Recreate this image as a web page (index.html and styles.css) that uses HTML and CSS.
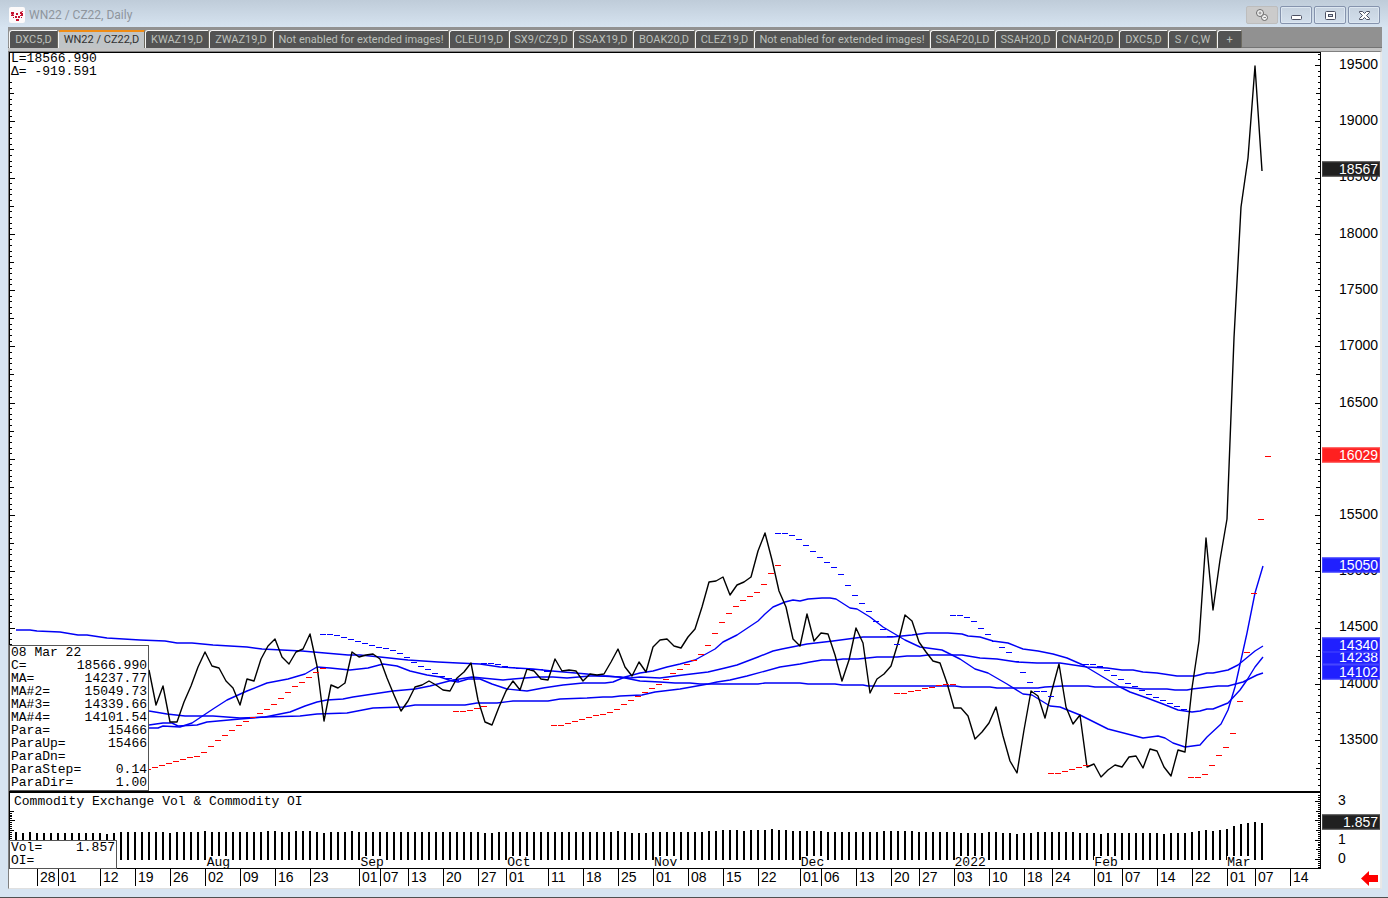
FILE: index.html
```html
<!DOCTYPE html>
<html lang="en">
<head>
<meta charset="utf-8">
<title>WN22 / CZ22, Daily</title>
<link rel="stylesheet" href="styles.css">
</head>
<body>
<div class="window">
  <header class="titlebar">
    <svg class="app-icon" viewBox="0 0 16 16" aria-hidden="true">
      <rect width="16" height="16" rx="2" fill="#fdfafa"/>
      <g fill="#c4122f">
        <path d="M2 5h3v2l-1 1h1v1H2V8l1-1H2z"/>
        <rect x="7" y="6" width="2" height="2"/>
        <rect x="6" y="9" width="2" height="2"/>
        <rect x="9" y="9" width="2" height="2"/>
        <path d="M11 5l3-1v1h-1v1h1v3h-3V8h1V7h-1z"/>
        <rect x="7" y="12" width="3" height="2"/>
        <rect x="4" y="10" width="1" height="1"/>
        <rect x="12" y="10" width="1" height="1"/>
      </g>
    </svg>
    <h1 class="title">WN22 / CZ22, Daily</h1>
    <div class="controls">
      <button class="ctl ctl-link" type="button" aria-label="Link">
        <svg viewBox="0 0 16 14" width="16" height="14"><g fill="#f2f2f2" stroke="#6a6a6a"><circle cx="6" cy="5" r="3.500"/><circle cx="10.500" cy="9.500" r="3"/><path d="M4.500 5h3M6 3.500v3M9.500 9.500h2.500" stroke="#888"/></g></svg>
      </button>
      <button class="ctl" type="button" aria-label="Minimize">
        <svg viewBox="0 0 16 14" width="16" height="14"><rect x="3.500" y="7.500" width="10" height="4" rx="1" fill="#fff" stroke="#4c5062"/></svg>
      </button>
      <button class="ctl" type="button" aria-label="Restore">
        <svg viewBox="0 0 16 14" width="16" height="14"><rect x="3.500" y="3.500" width="10" height="8" rx="1" fill="#fff" stroke="#4c5062"/><rect x="6.500" y="6.500" width="4" height="2" fill="#cdd9e6" stroke="#4c5062"/></svg>
      </button>
      <button class="ctl" type="button" aria-label="Close">
        <svg viewBox="0 0 16 14" width="16" height="14"><path d="M3.500 3.500h3L8.500 5.500l2-2h3v1L10.500 7.500l3 3v1h-3l-2-2-2 2h-3v-1l3-3-3-3z" fill="#fff" stroke="#4c5062"/></svg>
      </button>
    </div>
  </header>

  <nav class="tabs">
    <button class="tab" type="button">DXC5,D</button>
    <button class="tab active" type="button">WN22 / CZ22,D</button>
    <button class="tab" type="button">KWAZ19,D</button>
    <button class="tab" type="button">ZWAZ19,D</button>
    <button class="tab" type="button">Not enabled for extended images!</button>
    <button class="tab" type="button">CLEU19,D</button>
    <button class="tab" type="button">SX9/CZ9,D</button>
    <button class="tab" type="button">SSAX19,D</button>
    <button class="tab" type="button">BOAK20,D</button>
    <button class="tab" type="button">CLEZ19,D</button>
    <button class="tab" type="button">Not enabled for extended images!</button>
    <button class="tab" type="button">SSAF20,LD</button>
    <button class="tab" type="button">SSAH20,D</button>
    <button class="tab" type="button">CNAH20,D</button>
    <button class="tab" type="button">DXC5,D</button>
    <button class="tab" type="button">S / C,W</button>
    <button class="tab add" type="button" aria-label="Add tab">+</button>
  </nav>

  <main class="chart">
    <section class="pane price-pane">
      <svg class="plot" id="price-plot" viewBox="9 52 1312 739" preserveAspectRatio="none"></svg>
      <div class="last-quote">L=18566.990<br>Δ= -919.591</div>
      <table class="readout">
        <tbody>
          <tr><th class="name">08 Mar 22</th><td></td></tr>
          <tr><th>C=</th><td>18566.990</td></tr>
          <tr><th>MA=</th><td>14237.77</td></tr>
          <tr><th>MA#2=</th><td>15049.73</td></tr>
          <tr><th>MA#3=</th><td>14339.66</td></tr>
          <tr><th>MA#4=</th><td>14101.54</td></tr>
          <tr><th>Para=</th><td>15466</td></tr>
          <tr><th>ParaUp=</th><td>15466</td></tr>
          <tr><th>ParaDn=</th><td></td></tr>
          <tr><th>ParaStep=</th><td>0.14</td></tr>
          <tr><th>ParaDir=</th><td>1.00</td></tr>
        </tbody>
      </table>
    </section>
    <aside class="scale" id="price-scale"></aside>

    <section class="pane volume-pane">
      <svg class="plot" id="volume-plot" viewBox="9 791 1312 78" preserveAspectRatio="none"></svg>
      <h2 class="pane-title">Commodity Exchange Vol &amp; Commodity OI</h2>
      <div class="months" id="months"></div>
      <table class="readout readout-volume">
        <tbody>
          <tr><th>Vol=</th><td>1.857</td></tr>
          <tr><th>OI=</th><td></td></tr>
        </tbody>
      </table>
    </section>
    <aside class="scale scale-volume" id="volume-scale"></aside>

    <div class="dates" id="dates"></div>
    <div class="corner">
      <svg viewBox="0 0 17 15" width="17" height="15" aria-label="Scroll to latest"><path d="M0 7.500L8 0v4h9v7H8v4z" fill="#f00"/></svg>
    </div>
  </main>
</div>
<script src="chart.js"></script>
</body>
</html>
```

FILE: styles.css
```css
* {
  box-sizing: border-box;
}

html,
body {
  height: 100%;
  margin: 0;
}

.window {
  display: flex;
  flex-direction: column;
  height: 100vh;
  padding: 0 6px 8px 8px;
  background: #d7e4f1;
  border-bottom: 1px solid #505050;
  overflow: hidden;
}

.titlebar {
  display: flex;
  align-items: center;
  flex: none;
  height: 27px;
  margin: 0 -6px 0 -8px;
  padding: 3px 8px 0 9px;
  background: linear-gradient(#bfccd9, #d6e3f0);
}

.app-icon {
  width: 16px;
  height: 16px;
}

.title {
  flex: 1;
  margin: 0 0 0 4px;
  font: 12px/16px Roboto, sans-serif;
  color: #8e959d;
}

.controls {
  display: flex;
  gap: 2px;
}

.ctl {
  display: flex;
  align-items: center;
  justify-content: center;
  width: 32px;
  height: 18px;
  padding: 0;
  border: 1px solid #8593ad;
  border-radius: 2px;
  background: linear-gradient(#c6d2df, #d3dfec);
  box-shadow: inset 0 0 0 1px #dde7f1;
}

.ctl-link {
  border-color: #bdbdbd;
  background: #cbcbcb;
  box-shadow: none;
}

.tabs {
  display: grid;
  grid-template-columns: 49px 87px 64px 64px 176px 60px 64px 60px 62px 59px 176px 65px 61px 63px 49px 49px 25px;
  flex: none;
  height: 24px;
  padding: 3px 0 0 1px;
  background: #919191;
  border-bottom: 3px solid #c4c4c4;
  box-shadow: inset 0 -1px #747474;
}

.tab {
  padding: 0;
  overflow: hidden;
  border: 0;
  border-top: 1px solid #f4f4f4;
  border-left: 1px solid #f4f4f4;
  border-right: 1px solid #6c6a60;
  border-top-left-radius: 3px;
  background: #535353;
  font: 11px/16px Roboto, sans-serif;
  color: #bcc0bb;
  white-space: nowrap;
}

.tab.active {
  border-top: 2px solid #f08c14;
  background: #c0c4c6;
  color: #303030;
  line-height: 14px;
}

.chart {
  display: grid;
  grid-template-columns: minmax(0, 1fr) 59px;
  grid-template-rows: minmax(0, 1fr) 78px 19px;
  flex: 1;
  min-height: 0;
  border: 1px solid #808080;
  border-right: 2px solid #e8e8e8;
  border-bottom-color: #e0e0e0;
  background: #fff;
  font: 13px/13px "Liberation Mono", monospace;
  color: #000;
}

.pane {
  position: relative;
  border-left: 1px solid #000;
  border-right: 1px solid #000;
}

.price-pane {
  border-top: 1px solid #000;
}

.volume-pane {
  border-top: 2px solid #000;
  border-bottom: 1px solid #000;
}

.plot {
  position: absolute;
  inset: -1px;
  width: calc(100% + 2px);
  height: calc(100% + 1px);
}

.volume-pane .plot {
  inset: -2px -1px -1px;
  height: calc(100% + 3px);
}

.line {
  fill: none;
  stroke-linejoin: round;
  vector-effect: non-scaling-stroke;
}

.close {
  stroke: #000;
  stroke-width: 1.4;
}

.average {
  stroke: #0000f5;
  stroke-width: 1.4;
}

.crisp {
  shape-rendering: crispEdges;
}

.up {
  fill: #f00;
}

.down {
  fill: #00f;
}

.last-quote {
  position: absolute;
  top: -1px;
  left: 0;
  padding-left: 1px;
}

.readout {
  position: absolute;
  bottom: 0;
  left: -1px;
  width: 140px;
  padding-bottom: 1px;
  table-layout: fixed;
  border: 1px solid #555;
  border-collapse: separate;
  border-spacing: 0;
  background: #fff;
}

.readout th,
.readout td {
  padding: 0 1px;
  height: 13px;
  font-weight: normal;
  text-align: left;
  white-space: nowrap;
}

.readout td {
  width: 74px;
  text-align: right;
}

.readout-volume {
  bottom: -1px;
  width: 108px;
}

.pane-title {
  position: relative;
  margin: 2px 4px;
  font: inherit;
}

.months span {
  position: absolute;
  bottom: 0;
  height: 12px;
  background: #fff;
}

.scale,
.dates {
  position: relative;
  font: 14px/13px "Liberation Sans", sans-serif;
}

.scale span {
  position: absolute;
  right: 2px;
  transform: translateY(-50%);
}

.scale .badge {
  left: 1px;
  right: 0;
  height: 15px;
  padding-right: 1px;
  border: 1px solid;
  color: #fff;
  text-align: right;
}

.scale-volume span {
  right: auto;
  left: 17px;
}

.badge.black {
  background: #202020;
  border-color: #444;
}

.badge.red {
  background: #ff2020;
  border-color: #ff4848;
}

.badge.blue {
  background: #2020ff;
  border-color: #4848ff;
}

.dates span {
  position: absolute;
  top: 0;
  height: 17px;
  padding: 2px 0 0 2px;
  border-left: 1px solid #000;
}

.corner {
  display: flex;
  justify-content: flex-end;
  padding: 2px 2px 0 0;
}
```

FILE: chart.js
```js
const LEFT = 9, WIDTH = 1312, TOP = 52, HEIGHT = 739, VOL_TOP = 791, VOL_HEIGHT = 78;
const barX = i => 16 + 7 * i;
const priceY = p => 65 + (19500 - p) * 0.1125;
const volumeY = v => 859 - v * 19.33;

const close = [
  670,705,686,722,722,702,686,667,652,666,668,681,688,705,679,681,659,646,639,657,664,652,649,634,
  666,721,685,688,683,652,657,655,654,659,678,695,711,701,687,685,681,685,690,691,678,672,663,700,
  722,725,707,691,681,690,669,671,679,680,659,671,670,671,681,674,675,674,662,649,667,676,662,672,
  647,640,639,646,648,637,629,607,582,581,577,595,585,582,577,551,533,560,591,607,639,646,614,641,
  633,634,655,681,660,628,643,693,679,674,666,643,615,621,642,652,661,663,683,708,708,716,739,732,
  723,707,736,761,773,730,691,696,718,690,664,707,724,715,767,764,777,770,765,767,757,756,768,749,
  751,767,776,750,752,688,641,538,610,560,519,338,207,158,66,171
];

const averages = [
  "16,630 30,630 37,631 60,632 78,635 87,635 107,638 140,640 165,641 177,643 192,643 213,645 247,647 262,649 302,651 325,653 348,655 360,655 380,657 408,660 438,662 458,663 480,664 500,667 533,669 552,671 587,674 600,676 620,677 640,681 660,682 675,683 690,683 700,684 758,684 765,683 800,683 808,684 835,684 842,685 863,685 868,686 955,686 962,687 990,687 997,688 1038,688 1045,687 1063,686 1088,686 1095,687 1122,687 1143,689 1167,689 1175,690 1187,690 1192,689 1218,686 1228,686 1243,682 1257,675 1263,673",
  "149,711 167,714 185,716 213,716 240,718 265,717 300,716 317,714 347,713 373,708 403,707 415,705 465,705 477,703 497,703 513,701 548,701 560,699 587,698 603,697 612,697 620,696 642,695 655,692 680,689 708,684 717,682 730,680 747,676 780,667 800,664 810,662 822,660 835,660 843,659 858,659 877,657 897,657 907,656 920,656 928,655 962,655 980,658 997,659 1017,662 1037,663 1060,663 1087,667 1107,668 1122,670 1133,670 1143,672 1157,673 1177,676 1195,676 1207,673 1213,673 1228,670 1238,665 1255,651 1263,646",
  "149,725 163,723 172,723 178,726 197,725 207,722 240,719 265,717 290,712 305,706 317,702 327,700 343,699 353,697 393,691 415,689 430,686 453,680 472,677 482,678 503,680 513,679 537,677 553,677 567,678 590,676 607,676 630,678 640,677 660,678 683,675 708,672 725,668 737,665 758,657 773,651 782,649 807,644 833,641 863,637 892,637 912,635 927,633 948,633 962,634 968,636 980,637 993,641 1008,643 1023,649 1038,651 1053,654 1067,658 1083,665 1103,677 1120,687 1130,692 1147,698 1163,704 1178,710 1192,712 1200,711 1207,709 1213,709 1228,703 1240,690 1247,680 1255,667 1263,657",
  "149,728 158,728 163,726 180,727 192,723 213,709 227,700 247,691 267,683 288,679 305,674 317,667 330,668 350,670 368,668 383,664 397,666 410,671 427,675 440,677 452,681 458,682 468,679 480,679 492,684 507,689 527,691 543,688 563,685 583,683 605,683 613,682 625,677 640,673 653,671 667,667 680,664 695,660 715,649 723,642 737,635 758,621 765,614 773,607 785,602 793,600 800,601 808,599 822,598 830,598 836,599 850,608 857,609 870,617 883,627 905,640 920,647 942,650 960,659 975,669 988,673 1007,684 1023,694 1032,695 1050,706 1060,707 1080,715 1108,729 1143,738 1158,736 1165,738 1173,743 1185,747 1200,745 1207,737 1221,724 1228,710 1235,687 1247,633 1255,593 1263,566"
];

/* Parabolic stops: first bar index, class, then one level per bar. */
const stops = [
  [19, "up", [769,767,765,763,761,759,757,756,752,746,740,735,730,725,721,717,713,709,704,698,692,686,682,677,672,668]],
  [44, "down", [634,634,635,637,639,641,643,645,647,648,650,653,657,662,666,669,673,676,678,680]],
  [63, "up", [711,711,710,708,706]],
  [67, "down", [663,663,664,666,667,668,668,669,669,671]],
  [77, "up", [725,725,723,721,719,717,715,714,712,709,704,700,696,692,688,684,679,673,669,664,660,654,645,633,622,613,606,600,596,592,584,573,565]],
  [109, "down", [533,533,535,539,545,551,557,562,567,574,585,595,603,611,621,629,636,644]],
  [126, "up", [693,693,691,690,688,687,685,684,684]],
  [134, "down", [615,615,617,621,628,634,641,647,652,661,672,682,691,691,696]],
  [148, "up", [773,773,771,769,767,765]],
  [153, "down", [664,664,666,670,675,679,683,686,690,694,697,700,703,706,709]],
  [168, "up", [777,777,774,765,755,747,733,701,652,593,519,456]]
];

/* Bar tops of the volume pane as [level, number of bars]. */
const volumeRuns = [
  [832,1],[833,1],[832,1],[833,10],[834,1],[833,1],[832,7],[833,1],[832,4],[831,1],[832,8],[831,2],[832,2],[831,3],
  [832,1],[833,1],[832,3],[831,1],[832,18],[833,2],[832,17],[831,1],[832,1],[833,3],[832,8],[831,2],[830,3],[831,1],
  [830,3],[829,1],[830,2],[831,5],[832,8],[831,5],[832,6],[833,4],[832,2],[833,2],[834,1],[833,2],[832,6],[833,3],
  [834,1],[833,8],[834,1],[833,3],[832,1],[831,1],[830,1],[831,1],[830,1],[829,1],[826,1],[824,1],[823,1],[822,1],[823,1]
];

const dates = [
  [3,"28"],[6,"01"],[12,"12"],[17,"19"],[22,"26"],[27,"02"],[32,"09"],[37,"16"],[42,"23"],[49,"01"],[52,"07"],
  [56,"13"],[61,"20"],[66,"27"],[70,"01"],[76,"11"],[81,"18"],[86,"25"],[91,"01"],[96,"08"],[101,"15"],[106,"22"],
  [112,"01"],[115,"06"],[120,"13"],[125,"20"],[129,"27"],[134,"03"],[139,"10"],[144,"18"],[148,"24"],[154,"01"],
  [158,"07"],[163,"14"],[168,"22"],[173,"01"],[177,"07"],[182,"14"]
];
const months = [[27,"Aug"],[49,"Sep"],[70,"Oct"],[91,"Nov"],[112,"Dec"],[134,"2022"],[154,"Feb"],[173,"Mar"]];

const rect = (x, y, w, h, cls = "") =>
  `<rect class="crisp ${cls}" x="${x}" y="${y}" width="${w}" height="${h}"/>`;
const tickPair = (y, len) => rect(LEFT, y, len + 1, 1) + rect(1320 - len, y, len + 1, 1);

let price = "";
for (let p = 13100; p <= 19600; p += 50) {
  const y = Math.round(priceY(p));
  const len = p % 500 === 0 ? 5 : p % 250 === 0 ? 4 : 2;
  /* The left ruler starts below the last quote. */
  price += y > 80 ? tickPair(y, len) : rect(1320 - len, y, len + 1, 1);
}
for (const points of averages) price += `<polyline class="line average" points="${points}"/>`;
price += `<polyline class="line close" points="${close.map((y, k) => barX(k + 19) + "," + y).join(" ")}"/>`;
for (const [first, cls, levels] of stops) {
  levels.forEach((y, k) => { price += rect(barX(first + k) - 4, y, 6, 1, cls); });
}
document.getElementById("price-plot").innerHTML = price;

let volume = "";
for (let t = -5; t <= 33; t++) {
  const y = Math.round(volumeY(t / 10));
  const len = t % 10 === 0 ? 5 : t % 5 === 0 ? 4 : 2;
  volume += y > 810 ? tickPair(y, len) : rect(1320 - len, y, len + 1, 1);
}
let bar = 0;
for (const [y, count] of volumeRuns) {
  for (let k = 0; k < count && bar < 179; k++, bar++) volume += rect(barX(bar) - 1, y, 2, 860 - y);
}
document.getElementById("volume-plot").innerHTML = volume;

const across = x => ((x - LEFT) / WIDTH * 100).toFixed(3) + "%";
const down = (y, top, height) => ((y - top) / height * 100).toFixed(3) + "%";
const label = (y, top, height, text, cls = "") =>
  `<span class="${cls}" style="top:${down(y, top, height)}">${text}</span>`;

let scale = "";
for (let p = 13500; p <= 19500; p += 500) {
  if (p !== 16000) scale += label(priceY(p) - 1, TOP, HEIGHT, p);
}
for (const [y, text, colour] of [[169,18567,"black"],[455,16029,"red"],[565,15050,"blue"],[657,14238,"blue"],[645,14340,"blue"],[672,14102,"blue"]]) {
  scale += label(y, TOP, HEIGHT, text, "badge " + colour);
}
document.getElementById("price-scale").innerHTML = scale;

document.getElementById("volume-scale").innerHTML =
  label(800, VOL_TOP, VOL_HEIGHT, "3") + label(839, VOL_TOP, VOL_HEIGHT, "1") +
  label(858, VOL_TOP, VOL_HEIGHT, "0") + label(822, VOL_TOP, VOL_HEIGHT, "1.857", "badge black");

document.getElementById("dates").innerHTML =
  dates.map(([i, text]) => `<span style="left:${across(barX(i))}">${text}</span>`).join("");
document.getElementById("months").innerHTML =
  months.map(([i, text]) => `<span style="left:${across(barX(i) + 1)}">${text}</span>`).join("");
```
